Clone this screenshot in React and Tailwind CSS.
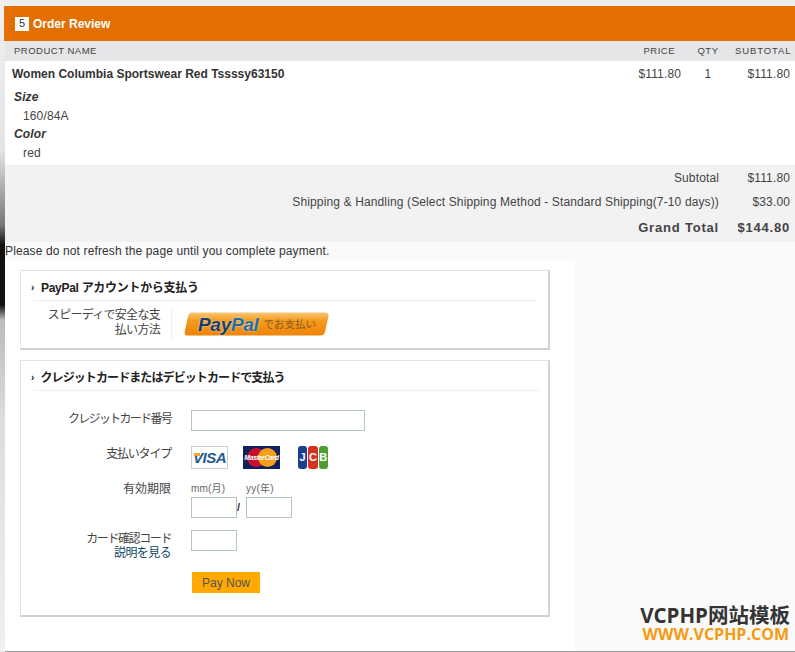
// App.jsx — Order review step with PayPal / credit card payment frame
import React from 'react';

const JP = "font-['Liberation_Sans','Noto_Sans_CJK_JP',sans-serif]";

const VisaLogo = () => (
  <div className="relative flex h-[23px] w-[37px] items-center justify-center border border-[#c9cfd2] bg-white">
    <span className="text-[15px] leading-none font-bold tracking-[-0.5px] text-[#1d5c92] italic">VISA</span>
    <span className="absolute top-[6px] left-[2px] h-[3px] w-[6px] bg-[#f0a628]" />
  </div>
);

const MasterLogo = () => (
  <div className="relative flex h-[23px] w-[37px] items-center justify-center bg-[#10205f]">
    <span className="absolute top-[2px] left-[4px] h-[19px] w-[19px] rounded-full bg-[#c8102e]" />
    <span className="absolute top-[2px] left-[15px] h-[19px] w-[19px] rounded-full bg-[#f79e1b]" />
    <span className="relative text-[7px] leading-none font-bold tracking-[-0.4px] text-white italic">MasterCard</span>
  </div>
);

const JcbLogo = () => (
  <div className="flex h-[23px] w-[30px] gap-px">
    <span className="flex flex-1 items-center justify-center rounded-[3px] bg-[#1d3f8f] text-[11px] leading-none font-bold text-white">J</span>
    <span className="flex flex-1 items-center justify-center rounded-[3px] bg-[#d8301f] text-[11px] leading-none font-bold text-white">C</span>
    <span className="flex flex-1 items-center justify-center rounded-[3px] bg-[#4f9e35] text-[11px] leading-none font-bold text-white">B</span>
  </div>
);

const PayPalButton = () => (
  <div className="relative flex h-[24px] w-[145px] items-center">
    <svg className="absolute inset-0" width="145" height="24" viewBox="0 0 145 24">
      <defs>
        <linearGradient id="ppg" x1="0" y1="0" x2="0" y2="1">
          <stop offset="0" stopColor="#f8c778" />
          <stop offset="0.35" stopColor="#f39a1e" />
          <stop offset="1" stopColor="#ee8508" />
        </linearGradient>
      </defs>
      <path d="M8 0.5H141Q145 0.5 144.5 4L141 20Q140 23.5 136 23.5H4Q0 23.5 0.7 20L4 4Q5 0.5 8 0.5Z" fill="url(#ppg)" />
    </svg>
    <span className="relative ml-[14px] text-[19px] leading-none font-bold tracking-[-0.3px] italic [text-shadow:0_0_2px_#ffe8c0]">
      <span className="text-[#123f73]">Pay</span>
      <span className="text-[#1f6eaa]">Pal</span>
    </span>
    <span className="relative ml-[5px] text-[10.5px] leading-none tracking-[0] text-[#8a5a1a]">でお支払い</span>
  </div>
);

const SummaryRow = ({ label, value, className }) => (
  <div className={`flex items-center justify-end ${className}`}>
    <span>{label}</span>
    <span className="w-[71px] text-right">{value}</span>
  </div>
);

const Field = ({ className }) => (
  <div className={`h-[21px] border border-[#b4c2c9] bg-white ${className}`} />
);

const FormRow = ({ label, className, children }) => (
  <div className={`flex ${className}`}>
    <div className="w-[138px] shrink-0 text-right">{label}</div>
    <div className="ml-[20px]">{children}</div>
  </div>
);

export default function App() {
  return (
    <div className={`relative h-[652px] w-[795px] overflow-hidden bg-[linear-gradient(180deg,#f0f0f0_0px,#e4e4e4_150px,#aaaaaa_190px,#777777_225px,#111111_245px,#111111_305px,#bbbbbb_320px,#dddddd_420px,#f0f0f0_652px)] pl-[5px] text-[12px] tracking-[0.13px] text-[#444] ${JP}`}>
      <div className="flex h-full flex-col border-b border-b-[#999] bg-[#fafafa]">
        <div className="-ml-[1px] h-[6px] bg-[#eeeeee]" />

        {/* Order review head */}
        <div className="-ml-[1px] flex h-[35px] items-center bg-[#e36f02] pl-[11px] text-white">
          <span className="flex h-[14px] w-[14px] items-center justify-center bg-white text-[11px] leading-none tracking-normal text-[#333]">5</span>
          <span className="ml-[4px] text-[12px] font-bold tracking-[0]">Order Review</span>
        </div>

        {/* Table head */}
        <div className="flex h-[20px] items-center bg-[#e6e6e8] pr-[5px] pl-[9px] text-[9.5px] tracking-[0.5px]">
          <span className="flex-1">PRODUCT NAME</span>
          <span className="w-[60px] pr-[6px] text-right">PRICE</span>
          <span className="w-[54px] text-center">QTY</span>
          <span className="w-[55px] text-right tracking-[0.9px]">SUBTOTAL</span>
        </div>

        {/* Product row */}
        <div className="flex h-[104px] bg-white pr-[5px] pl-[7px]">
          <div className="flex-1">
            <div className="mt-[6px] leading-[15px] font-bold tracking-[0] text-[#333]">Women Columbia Sportswear Red Tssssy63150</div>
            <div className="mt-[6px] pl-[2px] leading-[18.5px] font-bold text-[#333] italic">Size</div>
            <div className="pl-[11px] leading-[18.5px]">160/84A</div>
            <div className="pl-[2px] leading-[18.5px] font-bold text-[#333] italic">Color</div>
            <div className="pl-[11px] leading-[18.5px]">red</div>
          </div>
          <div className="mt-[6px] w-[60px] text-right leading-[15px]">$111.80</div>
          <div className="mt-[6px] w-[54px] text-center leading-[15px]">1</div>
          <div className="mt-[6px] w-[55px] text-right leading-[15px]">$111.80</div>
        </div>

        {/* Totals */}
        <div className="h-[77px] border-t border-t-[#ececec] bg-[#f2f2f2] pr-[5px]">
          <SummaryRow label="Subtotal" value="$111.80" className="h-[24px]" />
          <SummaryRow label="Shipping & Handling (Select Shipping Method - Standard Shipping(7-10 days))" value="$33.00" className="h-[24px]" />
          <SummaryRow label="Grand Total" value="$144.80" className="h-[28px] text-[13px] font-bold tracking-[0.8px]" />
        </div>

        <div className="h-[18px] pt-[1px] leading-[16px] text-[#333]">Please do not refresh the page until you complete payment.</div>

        {/* Payment frame */}
        <div className="w-[570px] flex-1 bg-white pt-[10px] pl-[15px]">
          <section className="h-[80px] w-[530px] border border-r-2 border-b-2 border-[#e4e4e4] border-r-[#d4d4d4] border-b-[#d0d0d0] px-[12px]">
            <h2 className="flex h-[30px] items-center border-b border-b-[#eeeeee] pt-[4px] text-[12px] font-bold tracking-[-0.3px] text-[#222]">
              <span className="mr-[7px] -ml-[2px] text-[10px] leading-none">›</span>PayPal アカウントから支払う
            </h2>
            <div className="mt-[7px] flex">
              <div className="w-[127px] text-right leading-[15px] tracking-[-0.7px]">スピーディで安全な支<br />払い方法</div>
              <div className="ml-[11px] flex h-[32px] items-center border-l border-l-[#eeeeee] pl-[12px]">
                <PayPalButton />
              </div>
            </div>
          </section>

          <section className="mt-[10px] h-[257px] w-[530px] border border-r-2 border-b-2 border-[#e4e4e4] border-r-[#d4d4d4] border-b-[#d0d0d0] pr-[8px] pl-[12px]">
            <h2 className="flex h-[30px] items-center border-b border-b-[#eeeeee] pt-[4px] text-[12px] font-bold tracking-[-0.9px] text-[#222]">
              <span className="mr-[7px] -ml-[2px] text-[10px] leading-none">›</span>クレジットカードまたはデビットカードで支払う
            </h2>
            <div className="pt-[19px] tracking-[0]">
              <FormRow label={<span className="relative top-[1px] tracking-[-1.7px]">クレジットカード番号</span>} className="leading-[16px]">
                <Field className="w-[174px]" />
              </FormRow>
              <FormRow label={<span className="tracking-[-1.2px]">支払いタイプ</span>} className="mt-[15px] leading-[16px]">
                <div className="flex items-center">
                  <VisaLogo />
                  <div className="ml-[15px]"><MasterLogo /></div>
                  <div className="ml-[18px]"><JcbLogo /></div>
                </div>
              </FormRow>
              <FormRow label={<span className="relative top-[1px]">有効期限</span>} className="mt-[11px] leading-[16px]">
                <div className="grid grid-cols-[46px_9px_46px] text-[10px] leading-[14px] tracking-[0.2px] text-[#666]">
                  <div className="col-start-1 mt-[2px]">mm(月)</div>
                  <div className="col-start-3 mt-[2px]">yy(年)</div>
                  <Field className="col-start-1 mt-[1px] w-[46px]" />
                  <div className="col-start-2 mt-[4px] text-left text-[11px] font-bold text-[#333]">/</div>
                  <Field className="col-start-3 mt-[1px] w-[46px]" />
                </div>
              </FormRow>
              <FormRow
                label={<><span className="relative top-[2px] tracking-[-1.4px]">カード確認コード</span><br /><span className="relative top-[1px] tracking-[-0.6px] text-[#0f4a66]">説明を見る</span></>}
                className="mt-[12px] leading-[15px]"
              >
                <Field className="w-[46px]" />
              </FormRow>
              <div className="mt-[12px] ml-[159px] flex h-[21px] w-[68px] items-center justify-center bg-[#ffa800] text-[12px] text-[#555]">Pay Now</div>
            </div>
          </section>
        </div>
      </div>

      {/* Site watermark */}
      <div className="absolute top-[604px] right-[5px] flex flex-col items-end font-['Open_Sans','Noto_Sans_CJK_SC',sans-serif] font-bold tracking-[0]">
        <span className="text-[20.5px] leading-[23px] text-[#333]">VCPHP网站模板</span>
        <span className="mr-[1px] text-[16px] leading-[15px] text-[#f79a10]">WWW.VCPHP.COM</span>
      </div>
    </div>
  );
}
